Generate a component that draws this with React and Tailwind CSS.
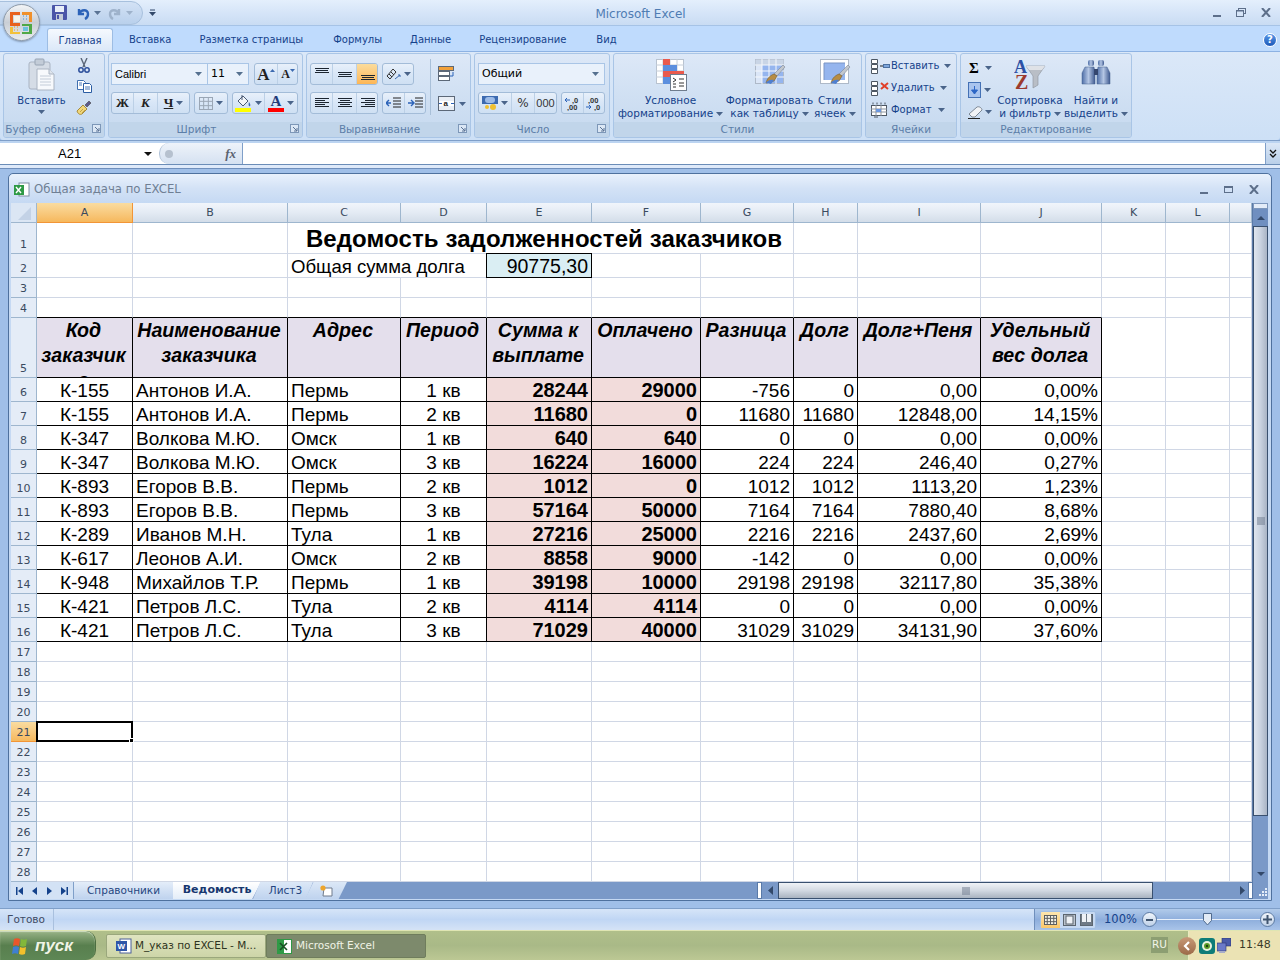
import React from 'react';

const Caret = ({ c = '#4a648a', className = '' }) => (
  <svg width="7" height="4" viewBox="0 0 7 4" className={`shrink-0 ${className}`}><path d="M0 0h7L3.5 4z" fill={c} /></svg>
);

const Lines = ({ rows, w = 16, h = 14 }) => (
  <svg width={w} height={h} viewBox={`0 0 ${w} ${h}`}>
    {rows.map(([x, y, l], i) => <rect key={i} x={x} y={y} width={l} height="1" fill="#1c2530" />)}
  </svg>
);

const Launcher = () => (
  <svg width="9" height="9" viewBox="0 0 9 9"><rect x=".5" y=".5" width="8" height="8" fill="#dbe7f5" stroke="#7d97b8" /><path d="M3 3l4 4M7 4v3H4" stroke="#5a7394" fill="none" /></svg>
);

const Group = ({ w, label, launcher, children, className = '' }) => (
  <div style={{ width: w }} className="flex h-[85px] shrink-0 flex-col overflow-hidden rounded-[3px] border border-[#a9c5e6] bg-gradient-to-b from-[#dde8f7] via-[#d0e0f3] to-[#c6d9ef]">
    <div className={`min-h-0 flex-1 ${className}`}>{children}</div>
    <div className={`relative flex h-[15px] shrink-0 items-center justify-center bg-[#c1d5ea] text-[10.5px] leading-none text-[#5c7ea8] ${launcher ? 'pr-[18px]' : ''}`}>
      {label}
      {launcher && <span className="absolute right-[3px] top-[2px] flex"><Launcher /></span>}
    </div>
  </div>
);

const BtnGroup = ({ w, children }) => (
  <div style={{ width: w }} className="flex h-[22px] shrink-0 items-center overflow-hidden rounded-[3px] border border-[#a3bcd8] bg-gradient-to-b from-[#e8f0fa] via-[#d8e6f7] to-[#cfe0f3]">{children}</div>
);

const Seg = ({ w, active, last, children }) => (
  <div style={{ width: w }} className={`flex h-full shrink-0 items-center justify-center gap-[3px] ${last ? '' : 'border-r border-[#bcd0e6]'} ${active ? 'bg-gradient-to-b from-[#fbdc9c] to-[#fdb655]' : ''}`}>{children}</div>
);

const Combo = ({ w, text, className = '' }) => (
  <div style={{ width: w }} className={`flex h-[22px] shrink-0 items-center justify-between border border-[#a9c5e6] bg-[#e9f1fb] pl-[3px] pr-[5px] text-[11px] text-black ${className}`}>
    <span>{text}</span><Caret c="#55708f" />
  </div>
);

const Clipboard = () => (
  <svg width="28" height="34" viewBox="0 0 28 34">
    <rect x="1" y="4" width="21" height="27" rx="2" fill="#d5dce6" stroke="#a9b3c2" />
    <rect x="7" y="1" width="9" height="6" rx="1" fill="#c3ccd8" stroke="#98a4b4" />
    <path d="M9 11h12l5 5v16H9z" fill="#f7f9fc" stroke="#aab4c2" />
    <path d="M21 11v5h5" fill="#dfe5ed" stroke="#aab4c2" />
    <path d="M12 18h11M12 21h11M12 24h11M12 27h11" stroke="#c3ccd8" />
  </svg>
);

const Scissors = () => (
  <svg width="12" height="15" viewBox="0 0 12 15">
    <path d="M3 0l4 9M9 0L5 9" stroke="#5a6678" strokeWidth="1.4" />
    <circle cx="3" cy="12" r="2.2" fill="none" stroke="#2c4f9b" strokeWidth="1.5" />
    <circle cx="9" cy="12" r="2.2" fill="none" stroke="#2c4f9b" strokeWidth="1.5" />
  </svg>
);

const Copy = () => (
  <svg width="15" height="13" viewBox="0 0 15 13">
    <path d="M.5.5h6l2 2v7h-8z" fill="#fff" stroke="#3f6fb0" />
    <path d="M6.5 3.5h6l2 2v7h-8z" fill="#fff" stroke="#2b5da3" />
    <path d="M8 7h5M8 9h5M2 3h3M2 5h3" stroke="#4a78b8" />
  </svg>
);

const Brush = () => (
  <svg width="16" height="15" viewBox="0 0 16 15">
    <path d="M1 11l6-6 4 4-5 5c-2 1-4 0-5-3z" fill="#f1d77a" stroke="#a88b3a" />
    <path d="M9 5l4-4 2 2-4 4z" fill="#5c5a8c" stroke="#444" strokeWidth=".6" />
    <path d="M4 12l3-3M6 13l3-3" stroke="#c2a34a" />
  </svg>
);

const Bucket = () => (
  <svg width="17" height="18" viewBox="0 0 17 18">
    <path d="M3 7l5-5 5 5-5 5z" fill="#f3f6fa" stroke="#4a5b74" />
    <path d="M7 1v5" stroke="#4a5b74" />
    <path d="M14 8c1 2 2 3 1 4s-2-1-1-4z" fill="#3c6ab0" />
    <rect x="0" y="14" width="16" height="4" fill="#ffff00" />
  </svg>
);

const Grid3 = ({ cols, rows, w, h, fill, stroke = '#7d8da3', children }) => (
  <svg width={w} height={h} viewBox={`0 0 ${w} ${h}`}>
    <rect x=".5" y=".5" width={w - 1} height={h - 1} fill={fill || '#fff'} stroke={stroke} />
    {Array.from({ length: cols - 1 }, (_, i) => <path key={i} d={`M${((i + 1) * w) / cols} 0V${h}`} stroke={stroke} />)}
    {Array.from({ length: rows - 1 }, (_, i) => <path key={i} d={`M0 ${((i + 1) * h) / rows}H${w}`} stroke={stroke} />)}
    {children}
  </svg>
);

const CondFormat = () => (
  <svg width="31" height="32" viewBox="0 0 31 32">
    <rect x=".5" y=".5" width="27" height="24" fill="#fff" stroke="#b9c3d0" />
    <path d="M7 0v25M14 0v25M21 0v25M0 6h28M0 12h28M0 18h28" stroke="#c6ced9" />
    <rect x="7" y="0" width="7" height="6" fill="#ea5a4d" />
    <rect x="7" y="6" width="14" height="6" fill="#5c8fde" />
    <rect x="7" y="12" width="21" height="6" fill="#ea5a4d" />
    <rect x="7" y="18" width="7" height="7" fill="#5c8fde" />
    <rect x="14.5" y="15.5" width="16" height="16" fill="#fff" stroke="#6f7c8d" />
    <path d="M17 19l3 2-3 2M17 25h3M23 20h5M23 24h5M23 27h5M17 28h3" stroke="#333" fill="none" />
  </svg>
);

const PaintBrush = ({ x = 16, y = 15 }) => (
  <g transform={`translate(${x} ${y})`}>
    <path d="M14-10l2 2-8 9-3-2z" fill="#c2c7ce" stroke="#7e8795" strokeWidth=".6" />
    <path d="M5-1l3 2-3 5-8 2c1-4 3-7 8-9z" fill="#b78c43" stroke="#7a5c27" strokeWidth=".6" />
    <path d="M-3 8c1-2 4-4 8-3l-3 4z" fill="#4f7fd0" />
  </g>
);

const FormatTable = () => (
  <svg width="32" height="30" viewBox="0 0 32 30">
    <rect x=".5" y=".5" width="28" height="24" fill="#dbe6f7" stroke="#aeb9c8" />
    <rect x=".5" y=".5" width="28" height="6" fill="#c9d5e6" />
    <rect x="7" y="6" width="21" height="18" fill="#95b5ee" />
    <path d="M7 0v25M14 0v25M21 0v25M0 6h29M0 12h29M0 18h29" stroke="#f4f7fb" />
    <PaintBrush x={14} y={16} />
  </svg>
);

const CellStyle = () => (
  <svg width="32" height="30" viewBox="0 0 32 30">
    <rect x=".5" y=".5" width="28" height="24" fill="#fff" stroke="#aeb9c8" />
    <rect x="4" y="4" width="21" height="17" fill="#95b5ee" />
    <path d="M4 4h21M4 4v17" stroke="#7b95c4" />
    <PaintBrush x={14} y={16} />
  </svg>
);

const CellInsert = ({ mark }) => (
  <svg width="19" height="15" viewBox="0 0 19 15" className="shrink-0">
    <path d="M.5.5h6v4h-6zM.5 5.5h6v4h-6zM.5 10.5h6v4h-6z" fill="#fff" stroke="#4d5763" />
    {mark === 'ins' && <><path d="M9 7h3" stroke="#222" /><rect x="12.5" y="5.5" width="6" height="3" fill="#7ea6dc" stroke="#4b6f9f" /></>}
    {mark === 'del' && <path d="M10 2l7 6M17 2l-7 6" stroke="#e0402a" strokeWidth="2" />}
  </svg>
);

const CellFormat = () => (
  <svg width="18" height="16" viewBox="0 0 18 16" className="shrink-0">
    <path d="M2 .5v2M6 .5v2M10 .5v2M14 .5v2" stroke="#4d5763" />
    <rect x=".5" y="3.5" width="15" height="10" fill="#fff" stroke="#4d5763" />
    <path d="M5 3v11M10 3v11M0 7h16M0 10h16" stroke="#8a939e" />
    <rect x="5" y="7" width="5" height="3" fill="#6b97e0" />
    <path d="M3 15h4" stroke="#4d5763" />
  </svg>
);

const Fill = () => (
  <svg width="13" height="16" viewBox="0 0 13 16"><rect x=".5" y=".5" width="12" height="15" fill="#a9c4ee" stroke="#4471b5" /><path d="M6.5 4v5M3.5 8h6l-3 4z" fill="#2d66c6" stroke="#2d66c6" /></svg>
);

const Eraser = () => (
  <svg width="16" height="14" viewBox="0 0 16 14"><path d="M1 9l8-7c2-1 5 1 5 3l-7 7H4z" fill="#f1f3f6" stroke="#7c8794" /><path d="M0 13.5h12" stroke="#222" /></svg>
);

const SortFilter = () => (
  <svg width="32" height="31" viewBox="0 0 32 31">
    <path d="M12 7h19l-7 10v9l-5 3V17z" fill="#b9bec6" stroke="#8b929c" strokeWidth=".6" />
    <path d="M12 7h19l-3 4H15z" fill="#dfe2e7" />
    <text x="0" y="14" fontFamily="Liberation Serif, serif" fontWeight="700" fontSize="18" fill="#2c50a4">A</text>
    <text x="1" y="30" fontFamily="Liberation Serif, serif" fontWeight="700" fontSize="20" fill="#9c3b2e">Z</text>
  </svg>
);

const Binoculars = () => (
  <svg width="30" height="28" viewBox="0 0 30 28">
    <defs><linearGradient id="bn" x1="0" x2="1"><stop offset="0" stopColor="#4f6fa8" /><stop offset=".5" stopColor="#b4c6e4" /><stop offset="1" stopColor="#3f5a90" /></linearGradient></defs>
    <rect x="7" y="1" width="6" height="6" rx="2" fill="url(#bn)" />
    <rect x="17" y="1" width="6" height="6" rx="2" fill="url(#bn)" />
    <path d="M4 8h9l1 5v12H1V14z" fill="url(#bn)" stroke="#46608f" strokeWidth=".5" />
    <path d="M17 8h9l3 6v11H16V13z" fill="url(#bn)" stroke="#46608f" strokeWidth=".5" />
    <rect x="13" y="10" width="4" height="6" fill="#34466e" />
  </svg>
);

const Orb = () => (
  <div className="absolute left-[3px] top-[4px] z-20 flex h-[37px] w-[37px] items-center justify-center rounded-full border border-[#8e9aa8] bg-gradient-to-b from-[#f3f5f7] via-[#c9ced5] to-[#e9ecef] shadow-[0_1px_2px_#7f93ad]">
    <svg width="25" height="25" viewBox="0 0 25 25">
      <path d="M1 2h10v3H4v8h7v3H1z" fill="#e8611c" />
      <rect x="5" y="6" width="6" height="6" fill="#f7f4ea" />
      <path d="M13 2h10v10h-3V5h-7z" fill="#f0902a" />
      <path d="M14 6h1M17 6h1M14 9h1M17 9h1" stroke="#3a8fd9" />
      <path d="M1 17h3v5h7v2H1z" fill="#f3c13a" />
      <path d="M5 17h1M8 17h1M5 20h1M8 20h1" stroke="#e0a020" />
      <path d="M13 14h10v10H13v-2h7v-6h-7z" fill="#4fa846" />
      <rect x="14" y="17" width="5" height="4" fill="#6cc0dd" />
    </svg>
  </div>
);

const WinMin = () => <span className="mb-[-6px] block h-[2px] w-[8px] bg-[#5d6f8a]" />;
const WinClose = () => (
  <svg width="10" height="9" viewBox="0 0 10 9"><path d="M1 0l8 9M9 0L1 9" stroke="#5d6f8a" strokeWidth="2" /></svg>
);

const TitleBar = () => (
  <div className="flex h-[26px] shrink-0 items-center border-b border-[#a6c3e6] bg-gradient-to-b from-[#e4effc] via-[#d6e5f8] to-[#c9dcf3]">
    <div className="ml-[-2px] flex h-[24px] w-[145px] shrink-0 items-center gap-[4px] rounded-r-[12px] border border-[#a7c0dd] bg-gradient-to-b from-[#d3e2f5] to-[#b9d0ec] pl-[53px]">
      <svg width="15" height="15" viewBox="0 0 15 15"><rect width="15" height="15" rx="1" fill="#4a55a8" /><rect x="3" y="1" width="9" height="6" fill="#e8eef8" /><rect x="4" y="9" width="7" height="6" fill="#c3cbd8" /><rect x="5" y="10" width="2" height="4" fill="#4a55a8" /></svg>
      <svg width="14" height="14" viewBox="0 0 14 14" className="ml-[5px]"><path d="M3 3v5h5M3 8c2-5 9-5 9 0 0 2-1 4-3 5" fill="none" stroke="#2b62b8" strokeWidth="2.4" /></svg>
      <Caret c="#5a7394" />
      <svg width="14" height="14" viewBox="0 0 14 14" className="ml-[3px]"><path d="M11 3v5H6M11 8C9 3 2 3 2 8c0 2 1 4 3 5" fill="none" stroke="#9eb2cb" strokeWidth="2.4" /></svg>
      <Caret c="#9eb2cb" />
    </div>
    <svg width="7" height="8" viewBox="0 0 7 8" className="ml-[6px]"><path d="M1 1h5" stroke="#33496a" /><path d="M0 3h7L3.5 7z" fill="#33496a" /></svg>
    <div className="ml-[254px] mr-[342px] w-0 flex-1 whitespace-nowrap pt-[3px] text-center text-[12px] text-[#4f7cb3]">Microsoft Excel</div>
    <div className="flex items-center gap-[15px] pr-[9px]">
      <WinMin />
      <svg width="10" height="9" viewBox="0 0 10 9"><rect x="2.5" y=".5" width="7" height="5" fill="none" stroke="#5d6f8a" /><rect x=".5" y="2.5" width="7" height="6" fill="#d6e5f8" stroke="#5d6f8a" /><path d="M0 3h8" stroke="#5d6f8a" /></svg>
      <WinClose />
    </div>
  </div>
);

const TabsBar = () => {
  const tabs = [['Вставка', 'ml-[16px]'], ['Разметка страницы', 'ml-[28px]'], ['Формулы', 'ml-[30px]'], ['Данные', 'ml-[28px]'], ['Рецензирование', 'ml-[28px]'], ['Вид', 'ml-[30px]']];
  return (
    <div className="flex h-[25px] shrink-0 items-end bg-[#bfdbfd] pl-[47px] text-[10px] text-[#15428b]">
      <div className="flex h-[23px] w-[66px] items-center justify-center rounded-t-[3px] border border-b-0 border-[#9dbde4] bg-gradient-to-b from-[#f5f9fe] to-[#dbe8f8]">Главная</div>
      {tabs.map(([t, c]) => <div key={t} className={`flex h-[23px] items-center ${c}`}>{t}</div>)}
      <div className="mb-[4px] ml-auto mr-[3px] flex h-[14px] w-[14px] items-center justify-center rounded-full border border-white bg-gradient-to-b from-[#5a98e8] to-[#1b58b8] text-[10px] font-bold leading-none text-white">?</div>
    </div>
  );
};

const Ribbon = () => (
  <div className="flex h-[89px] shrink-0 gap-[3px] rounded-b-[3px] border-t border-[#8db2e3] bg-gradient-to-b from-[#dbe8f8] to-[#cde0f6] pl-[3px] pr-[2px] pt-[1px] font-['DejaVu_Sans',sans-serif] text-[#15428b]">
    <Group w={102} label="Буфер обмена" launcher className="flex gap-[2px] pl-[8px] pt-[4px]">
      <div className="flex w-[62px] flex-col items-center pr-[3px]">
        <Clipboard />
        <span className="mt-[2px] text-[10px] leading-[13px]">Вставить</span>
        <Caret className="mt-[3px]" />
      </div>
      <div className="flex flex-col items-center gap-[7px]"><Scissors /><Copy /><Brush /></div>
    </Group>

    <Group w={195} label="Шрифт" launcher className="flex flex-col gap-[7px] pl-[2px] pt-[9px]">
      <div className="flex items-center">
        <Combo w={97} text="Calibri" className="font-['Liberation_Sans',sans-serif] text-[11.5px]" />
        <Combo w={42} text="11" className="ml-[-1px]" />
        <div className="ml-[5px]"><BtnGroup w={44}>
          <Seg w={23}>
            <span className="font-['Liberation_Serif',serif] text-[17px] font-bold leading-none text-[#222]">A</span>
            <svg width="5" height="3" viewBox="0 0 5 3" className="mb-[8px] ml-[-3px]"><path d="M0 3h5L2.5 0z" fill="#3c6ab0" /></svg>
          </Seg>
          <Seg w={20} last>
            <span className="font-['Liberation_Serif',serif] text-[12px] font-bold leading-none text-[#222]">A</span>
            <svg width="5" height="3" viewBox="0 0 5 3" className="mb-[8px] ml-[-3px]"><path d="M0 0h5L2.5 3z" fill="#3c6ab0" /></svg>
          </Seg>
        </BtnGroup></div>
      </div>
      <div className="flex items-center gap-[4px]">
        <BtnGroup w={79}>
          <Seg w={22}><span className="font-['Liberation_Serif',serif] text-[13px] font-bold text-[#222]">Ж</span></Seg>
          <Seg w={24}><span className="font-['Liberation_Serif',serif] text-[13px] font-bold italic text-[#222]">К</span></Seg>
          <Seg w={31} last><span className="font-['Liberation_Serif',serif] text-[13px] font-bold text-[#222] underline">Ч</span><Caret /></Seg>
        </BtnGroup>
        <BtnGroup w={34}>
          <Seg w={32} last><Grid3 cols={3} rows={3} w={14} h={13} fill="none" stroke="#9aa6b5" /><Caret /></Seg>
        </BtnGroup>
        <BtnGroup w={66}>
          <Seg w={32}><Bucket /><Caret /></Seg>
          <Seg w={32} last>
            <span className="flex flex-col items-center"><span className="font-['Liberation_Serif',serif] text-[15px] font-bold leading-[14px] text-[#223a78]">A</span><span className="block h-[4px] w-[16px] bg-[#ff0000]" /></span>
            <Caret />
          </Seg>
        </BtnGroup>
      </div>
    </Group>

    <Group w={165} label="Выравнивание" launcher className="flex pl-[3px] pt-[9px]">
      <div className="flex flex-col gap-[7px]">
        <div className="flex gap-[4px]">
          <BtnGroup w={68}>
            <Seg w={22}><Lines rows={[[1, 1, 14], [2, 3, 12], [1, 5, 14]]} /></Seg>
            <Seg w={24}><Lines rows={[[1, 5, 14], [2, 7, 12], [1, 9, 14]]} /></Seg>
            <Seg w={21} last active><Lines rows={[[1, 8, 14], [2, 10, 12], [1, 12, 14]]} /></Seg>
          </BtnGroup>
          <BtnGroup w={32}>
            <Seg w={30} last>
              <svg width="15" height="13" viewBox="0 0 15 13"><path d="M1 8l6-7 3 3-6 7zM3 6l3 3M5 4l3 3" stroke="#333" fill="none" /><path d="M9 11l5-4m-2 0h2v2" stroke="#3c6ab0" fill="none" /></svg>
              <Caret />
            </Seg>
          </BtnGroup>
        </div>
        <div className="flex gap-[4px]">
          <BtnGroup w={68}>
            <Seg w={22}><Lines rows={[[1, 2, 14], [1, 4, 10], [1, 6, 14], [1, 8, 10], [1, 10, 14]]} /></Seg>
            <Seg w={24}><Lines rows={[[1, 2, 14], [3, 4, 10], [1, 6, 14], [3, 8, 10], [1, 10, 14]]} /></Seg>
            <Seg w={21} last><Lines rows={[[1, 2, 14], [5, 4, 10], [1, 6, 14], [5, 8, 10], [1, 10, 14]]} /></Seg>
          </BtnGroup>
          <BtnGroup w={44}>
            <Seg w={22}><svg width="15" height="13" viewBox="0 0 15 13"><path d="M7 1h8M7 4h8M7 7h8M7 10h8" stroke="#222" /><path d="M0 6h5M3 3L0 6l3 3" stroke="#2b62b8" fill="none" strokeWidth="1.4" /></svg></Seg>
            <Seg w={20} last><svg width="15" height="13" viewBox="0 0 15 13"><path d="M7 1h8M7 4h8M7 7h8M7 10h8" stroke="#222" /><path d="M0 6h5M3 3l3 3-3 3" stroke="#2b62b8" fill="none" strokeWidth="1.4" /></svg></Seg>
          </BtnGroup>
        </div>
      </div>
      <div className="ml-[4px] mt-[-4px] h-[56px] w-px bg-[#a9c0d9]" />
      <div className="ml-[7px] flex flex-col gap-[14px] pt-[3px]">
        <svg width="17" height="16" viewBox="0 0 17 16"><rect x=".5" y=".5" width="15" height="4" fill="#f2a13a" stroke="#5c6878" /><rect x=".5" y="5.5" width="11" height="4" fill="#fff" stroke="#5c6878" /><rect x=".5" y="10.5" width="11" height="4" fill="#fff" stroke="#5c6878" /><path d="M15 6v4h-3" stroke="#2b62b8" fill="none" /></svg>
        <div className="flex items-center gap-[4px]">
          <svg width="17" height="15" viewBox="0 0 17 15"><rect x=".5" y=".5" width="16" height="14" fill="#e9eef5" stroke="#5c6878" /><rect x="1" y="5" width="15" height="5" fill="#fff" /><path d="M1 7.5h3M13 7.5h3" stroke="#2b62b8" /><text x="5.5" y="10" fontSize="8" fontWeight="700" fontFamily="Liberation Sans, sans-serif" fill="#222">a</text></svg>
          <Caret />
        </div>
      </div>
    </Group>

    <Group w={136} label="Число" launcher className="flex flex-col gap-[7px] pl-[3px] pt-[9px]">
      <Combo w={127} text="Общий" />
      <div className="flex gap-[4px]">
        <BtnGroup w={79}>
          <Seg w={33}>
            <svg width="16" height="16" viewBox="0 0 16 16"><rect y="1" width="16" height="8" fill="#3c6ab0" /><rect x="3" y="2" width="10" height="6" rx="3" fill="#9cbbe8" /><circle cx="11" cy="12" r="3" fill="#f0c030" /><circle cx="5" cy="12" r="2" fill="#f0c030" /></svg>
            <Caret />
          </Seg>
          <Seg w={23}><span className="text-[12px] text-[#333]">%</span></Seg>
          <Seg w={21} last><span className="font-['Liberation_Sans',sans-serif] text-[11px] text-[#333]">000</span></Seg>
        </BtnGroup>
        <BtnGroup w={44}>
          <Seg w={22}><svg width="18" height="15" viewBox="0 0 18 15"><path d="M1 4h5M3 2L1 4l2 2" stroke="#2b62b8" fill="none" /><text x="8" y="7" fontSize="7.5" fontWeight="700" fill="#333" fontFamily="Liberation Sans, sans-serif">,0</text><text x="3" y="14" fontSize="7.5" fontWeight="700" fill="#333" fontFamily="Liberation Sans, sans-serif">,00</text></svg></Seg>
          <Seg w={20} last><svg width="18" height="15" viewBox="0 0 18 15"><text x="3" y="7" fontSize="7.5" fontWeight="700" fill="#333" fontFamily="Liberation Sans, sans-serif">,00</text><path d="M1 11h5M4 9l2 2-2 2" stroke="#2b62b8" fill="none" /><text x="9" y="14" fontSize="7.5" fontWeight="700" fill="#333" fontFamily="Liberation Sans, sans-serif">,0</text></svg></Seg>
        </BtnGroup>
      </div>
    </Group>

    <Group w={249} label="Стили" className="flex items-start pt-[5px] text-[10.5px] leading-[13px]">
      <div className="flex w-[113px] flex-col items-center"><div className="flex h-[32px] items-start pl-[2px]"><CondFormat /></div><span className="mt-[3px]">Условное</span><span className="flex items-center gap-[3px] whitespace-nowrap">форматирование<Caret /></span></div>
      <div className="flex w-[85px] flex-col items-center"><div className="flex h-[32px] items-start pl-[2px]"><FormatTable /></div><span className="mt-[3px] whitespace-nowrap">Форматировать</span><span className="flex items-center gap-[3px] whitespace-nowrap">как таблицу<Caret /></span></div>
      <div className="flex w-[46px] flex-col items-center"><div className="flex h-[32px] items-start pl-[2px]"><CellStyle /></div><span className="mt-[3px]">Стили</span><span className="flex items-center gap-[3px] whitespace-nowrap">ячеек<Caret /></span></div>
    </Group>

    <Group w={92} label="Ячейки" className="flex flex-col gap-[6px] pl-[5px] pt-[4px] text-[10px] leading-[16px]">
      <div className="flex items-center gap-[1px]"><CellInsert mark="ins" />Вставить<Caret className="ml-[4px]" /></div>
      <div className="flex items-center gap-[1px]"><CellInsert mark="del" />Удалить<Caret className="ml-[4px]" /></div>
      <div className="flex items-center gap-[2px]"><CellFormat />Формат<Caret className="ml-[4px]" /></div>
    </Group>

    <Group w={172} label="Редактирование" className="flex pl-[7px] pt-[5px] text-[10.5px] leading-[13px]">
      <div className="flex w-[26px] flex-col gap-[6px] pt-[1px]">
        <div className="flex h-[16px] items-center gap-[6px] pl-[1px]"><span className="font-['Liberation_Serif',serif] text-[15px] font-bold leading-none text-black">Σ</span><Caret /></div>
        <div className="flex h-[16px] items-center gap-[3px]"><Fill /><Caret /></div>
        <div className="flex h-[16px] items-center gap-[1px]"><Eraser /><Caret /></div>
      </div>
      <div className="flex w-[72px] flex-col items-center"><div className="flex h-[32px] items-start"><SortFilter /></div><span className="mt-[3px] whitespace-nowrap">Сортировка</span><span className="flex items-center gap-[3px] whitespace-nowrap">и фильтр<Caret /></span></div>
      <div className="flex w-[60px] flex-col items-center"><div className="flex h-[32px] items-start"><Binoculars /></div><span className="mt-[3px] whitespace-nowrap">Найти и</span><span className="flex items-center gap-[3px] whitespace-nowrap">выделить<Caret /></span></div>
    </Group>
  </div>
);

const FormulaBar = () => (
  <div className="shrink-0 bg-[#a9c6ec]">
    <div className="h-[3px] border-t border-[#7f9fc9] bg-[#bcd4f1]" />
    <div className="flex h-[22px] border-b border-[#6b8db8] bg-white">
      <div className="flex w-[159px] items-center justify-between pl-[58px] pr-[7px] pt-[1px] font-['Liberation_Sans',sans-serif] text-[13px] text-black">A21<svg width="8" height="4" viewBox="0 0 8 4"><path d="M0 0h8L4 4z" fill="#111" /></svg></div>
      <div className="flex w-[84px] items-center justify-between rounded-l-[10px] border-l border-r border-l-[#b0c2d8] border-r-[#7f9fc9] bg-gradient-to-b from-[#eef3fa] to-[#d5e1f1] pl-[5px] pr-[6px]">
        <span className="h-[8px] w-[8px] rounded-full bg-[#b6c1cf]" />
        <span className="font-['Liberation_Serif',serif] text-[13px] font-bold italic text-[#5a6270]">fx</span>
      </div>
      <div className="flex-1" />
      <div className="flex w-[15px] items-center justify-center border-l border-[#7f9fc9] bg-gradient-to-b from-[#dce8f7] to-[#b9cfe9]">
        <svg width="8" height="9" viewBox="0 0 8 9"><path d="M1 1l3 3 3-3M1 5l3 3 3-3" stroke="#111" fill="none" strokeWidth="1.3" /></svg>
      </div>
    </div>
    <div className="h-[4px] border-b border-[#6f8fbc] bg-[#dfeafa]" />
  </div>
);

const headers = [
  <>Код<br />заказчик<br />а</>,
  <>Наименование<br />заказчика</>,
  'Адрес',
  'Период',
  <>Сумма к<br />выплате</>,
  'Оплачено',
  'Разница',
  'Долг',
  'Долг+Пеня',
  <>Удельный<br />вес долга</>,
];

const data = [
  ['К-155', 'Антонов И.А.', 'Пермь', '1 кв', '28244', '29000', '-756', '0', '0,00', '0,00%'],
  ['К-155', 'Антонов И.А.', 'Пермь', '2 кв', '11680', '0', '11680', '11680', '12848,00', '14,15%'],
  ['К-347', 'Волкова М.Ю.', 'Омск', '1 кв', '640', '640', '0', '0', '0,00', '0,00%'],
  ['К-347', 'Волкова М.Ю.', 'Омск', '3 кв', '16224', '16000', '224', '224', '246,40', '0,27%'],
  ['К-893', 'Егоров В.В.', 'Пермь', '2 кв', '1012', '0', '1012', '1012', '1113,20', '1,23%'],
  ['К-893', 'Егоров В.В.', 'Пермь', '3 кв', '57164', '50000', '7164', '7164', '7880,40', '8,68%'],
  ['К-289', 'Иванов М.Н.', 'Тула', '1 кв', '27216', '25000', '2216', '2216', '2437,60', '2,69%'],
  ['К-617', 'Леонов А.И.', 'Омск', '2 кв', '8858', '9000', '-142', '0', '0,00', '0,00%'],
  ['К-948', 'Михайлов Т.Р.', 'Пермь', '1 кв', '39198', '10000', '29198', '29198', '32117,80', '35,38%'],
  ['К-421', 'Петров Л.С.', 'Тула', '2 кв', '4114', '4114', '0', '0', '0,00', '0,00%'],
  ['К-421', 'Петров Л.С.', 'Тула', '3 кв', '71029', '40000', '31029', '31029', '34131,90', '37,60%'],
];

const cols = ['A', 'B', 'C', 'D', 'E', 'F', 'G', 'H', 'I', 'J', 'K', 'L', ''];

const RowNum = ({ n, sel }) => (
  <div className={`flex items-end justify-center border-b border-r pb-[1px] font-['DejaVu_Sans',sans-serif] text-[11px] leading-[15px] text-[#3a4a60] ${sel ? 'border-[#f29536] bg-gradient-to-b from-[#f9dca0] to-[#f6b85c]' : 'border-[#9eb6ce] bg-[#e4ecf7]'}`}>{n}</div>
);

const Blank = ({ black }) => <div className={`border-b border-r border-r-[#d0d7e5] ${black ? 'border-b-black' : 'border-b-[#d0d7e5]'}`} />;

const Sheet = () => {
  const align = ['justify-center', 'justify-start pl-[3px]', 'justify-start pl-[3px]', 'justify-center', 'justify-end pr-[3px]', 'justify-end pr-[3px]', 'justify-end pr-[3px]', 'justify-end pr-[3px]', 'justify-end pr-[3px]', 'justify-end pr-[3px]'];
  const emptyRows = [17, 18, 19, 20, 21, 22, 23, 24, 25, 26, 27, 28];
  return (
    <div className="grid grid-cols-[26px_96px_155px_113px_86px_105px_109px_93px_64px_123px_121px_64px_64px_22px] grid-rows-[20px_31px_24px_20px_20px_60px_repeat(11,24px)_repeat(12,20px)] bg-white font-['Liberation_Sans',sans-serif] text-[19px] text-black">
      <div className="flex items-center justify-center border-b border-r border-[#9eb6ce] bg-[#dbe6f4]">
        <svg width="14" height="14" viewBox="0 0 14 14"><path d="M14 1v13H1z" fill="#c3d2e6" /></svg>
      </div>
      {cols.map((c, i) => (
        <div key={i} className={`flex items-center justify-center border-b border-r pt-[2px] font-['DejaVu_Sans',sans-serif] text-[11px] text-[#3a4a60] ${i === 0 ? 'border-[#f29536] bg-gradient-to-b from-[#f9dca0] to-[#f6b85c]' : 'border-[#9eb6ce] bg-gradient-to-b from-[#f1f5fb] via-[#e4ebf4] to-[#d3dde9]'}`}>{c}</div>
      ))}

      <RowNum n={1} /><Blank /><Blank />
      <div className="col-span-5 flex items-center justify-center whitespace-nowrap border-b border-r border-[#d0d7e5] pl-[7px] pt-[1px] text-[24px] font-bold tracking-[0.1px]">Ведомость задолженностей заказчиков</div>
      <Blank /><Blank /><Blank /><Blank /><Blank /><Blank />

      <RowNum n={2} /><Blank /><Blank />
      <div className="col-span-2 flex items-center whitespace-nowrap border-b border-[#d0d7e5] pl-[3px] pt-[2px] text-[18.6px]">Общая сумма долга</div>
      <div className="relative z-10 ml-[-1px] mt-[-1px] flex items-center justify-end border border-black bg-[#daeef3] pr-[3px] pt-[2px] text-[19.5px]">90775,30</div>
      <Blank /><Blank /><Blank /><Blank /><Blank /><Blank /><Blank /><Blank />

      <RowNum n={3} />{cols.map((_, i) => <Blank key={i} />)}
      <RowNum n={4} />{cols.map((_, i) => <Blank key={i} black={i < 10} />)}

      <RowNum n={5} />
      {headers.map((h, i) => (
        <div key={i} className="overflow-hidden whitespace-nowrap border-b border-r border-black bg-[#e4dfec] pr-[2px] text-center text-[19.6px] font-bold italic leading-[25px]">{h}</div>
      ))}
      <Blank /><Blank /><Blank />

      {data.map((r, ri) => (
        <React.Fragment key={ri}>
          <RowNum n={ri + 6} />
          {r.map((v, i) => (
            <div key={i} className={`flex items-center whitespace-nowrap border-b border-r border-black pt-[1px] leading-none ${align[i]} ${i === 4 || i === 5 ? 'bg-[#f2dcdb] text-[20px] font-bold' : ''}`}>{v}</div>
          ))}
          <Blank /><Blank /><Blank />
        </React.Fragment>
      ))}

      {emptyRows.map((n) => (
        <React.Fragment key={n}>
          <RowNum n={n} sel={n === 21} />
          {cols.map((_, i) =>
            n === 21 && i === 0 ? (
              <div key={i} className="relative z-10 ml-[-1px] mt-[-1px] border-2 border-black">
                <span className="absolute bottom-[-3px] right-[-3px] h-[5px] w-[5px] border border-white bg-black" />
              </div>
            ) : <Blank key={i} />
          )}
        </React.Fragment>
      ))}
    </div>
  );
};

const VScroll = () => (
  <div className="flex w-[16px] shrink-0 flex-col items-center border-l border-[#5a7aa8] bg-[#7a99c8]">
    <div className="h-[6px] w-full border border-[#7d97bc] bg-[#e3ecf8]" />
    <div className="flex h-[17px] w-full items-center justify-center bg-[#6f8fc0]"><svg width="8" height="4" viewBox="0 0 8 4"><path d="M0 4h8L4 0z" fill="#33496a" /></svg></div>
    <div className="flex h-[590px] w-full items-center justify-center border border-[#39506f] bg-gradient-to-r from-[#dfe5ee] via-[#c9d2e0] to-[#a9b4c5]">
      <svg width="8" height="8" viewBox="0 0 8 8"><path d="M0 1h8M0 3h8M0 5h8M0 7h8" stroke="#6e7b8d" /></svg>
    </div>
    <div className="flex-1" />
    <div className="flex h-[16px] w-full items-center justify-center"><svg width="8" height="4" viewBox="0 0 8 4"><path d="M0 0h8L4 4z" fill="#33496a" /></svg></div>
  </div>
);

const NavTri = ({ d }) => <svg width="8" height="8" viewBox="0 0 8 8"><path d={d} fill="#15428b" /></svg>;

const SheetTabs = () => (
  <div className="flex h-[17px] shrink-0 items-stretch bg-[#7a99c8] font-['DejaVu_Sans',sans-serif] text-[10.5px] text-[#25467f]">
    <div className="flex w-[63px] items-center justify-around border-r border-[#7f9fc9] bg-[#d3e2f5] px-[2px]">
      <NavTri d="M0 0h1.5v8H0zM7 0v8L2 4z" /><NavTri d="M6 0v8L1 4z" /><NavTri d="M2 0v8l5-4z" /><NavTri d="M1 0v8l5-4zM6.5 0H8v8H6.5z" />
    </div>
    <div className="flex w-[99px] items-center justify-center bg-gradient-to-b from-[#e4edf9] to-[#bfd3ee]">Справочники</div>
    <div className="flex w-[88px] items-center justify-center bg-gradient-to-b from-white to-[#e4edf8] text-[11px] font-bold text-[#17376f] [clip-path:polygon(0_0,100%_0,90%_100%,0_100%)]">Ведомость</div>
    <div className="ml-[-8px] flex w-[60px] items-center justify-center bg-gradient-to-b from-[#dce8f7] to-[#bfd3ee] pl-[5px] [clip-path:polygon(12%_0,100%_0,88%_100%,0_100%)]">Лист3</div>
    <div className="ml-[-8px] flex w-[42px] items-center justify-center bg-gradient-to-b from-[#dce8f7] to-[#bfd3ee] [clip-path:polygon(20%_0,100%_0,80%_100%,0_100%)]">
      <svg width="13" height="12" viewBox="0 0 13 12"><path d="M4 3h8v8H3z" fill="#fff" stroke="#6e7b8d" /><circle cx="3" cy="3" r="2.6" fill="#eda52c" /></svg>
    </div>
    <div className="w-[410px]" />
    <div className="h-full w-[5px] border border-[#5a7aa8] bg-white" />
    <div className="flex w-[16px] items-center justify-center"><svg width="5" height="9" viewBox="0 0 5 9"><path d="M5 0v9L0 4.5z" fill="#33496a" /></svg></div>
    <div className="flex w-[375px] items-center justify-center border border-[#39506f] bg-gradient-to-b from-[#f0f3f7] via-[#d3d9e2] to-[#a9b3c0]">
      <svg width="8" height="8" viewBox="0 0 8 8"><path d="M1 0v8M3 0v8M5 0v8M7 0v8" stroke="#6e7b8d" /></svg>
    </div>
    <div className="flex-1" />
    <div className="flex w-[12px] items-center justify-center"><svg width="5" height="9" viewBox="0 0 5 9"><path d="M0 0v9l5-4.5z" fill="#33496a" /></svg></div>
    <div className="h-full w-[5px] border border-[#5a7aa8] bg-white" />
    <div className="flex w-[15px] items-end justify-end pb-[1px] pr-[1px]"><svg width="11" height="11" viewBox="0 0 11 11"><path d="M9 1h2v2H9zM6 4h2v2H6zM9 4h2v2H9zM3 7h2v2H3zM6 7h2v2H6zM9 7h2v2H9z" fill="#e6eef9" /></svg></div>
  </div>
);

const WorkbookWindow = () => (
  <div className="mx-[8px] mt-[4px] flex h-[728px] shrink-0 flex-col rounded-t-[5px] border border-[#4f719e] bg-[#c5d9f3] pb-[1px] pl-[2px] pr-[3px]">
    <div className="ml-[-2px] mr-[-3px] flex h-[29px] shrink-0 items-center rounded-t-[5px] bg-gradient-to-b from-[#e9f1fc] via-[#d3e2f6] to-[#c5d9f3] pl-[5px] pr-[12px] pt-[2px]">
      <svg width="16" height="16" viewBox="0 0 16 16"><rect x="5" y="1" width="10" height="13" fill="#fff" stroke="#7f8fa3" /><rect x="0" y="3" width="10" height="10" fill="#2f9a46" /><path d="M2 5l5 6M7 5l-5 6" stroke="#fff" strokeWidth="1.4" /></svg>
      <span className="ml-[4px] font-['DejaVu_Sans',sans-serif] text-[11.7px] text-[#6f7f94]">Общая задача по EXCEL</span>
      <div className="ml-auto flex items-center gap-[16px]">
        <WinMin />
        <span className="block h-[7px] w-[9px] border border-t-2 border-[#5d6f8a]" />
        <WinClose />
      </div>
    </div>
    <div className="flex min-h-0 flex-1">
      <div className="min-w-0 flex-1 overflow-hidden"><Sheet /></div>
      <VScroll />
    </div>
    <SheetTabs />
  </div>
);

const StatusBar = () => (
  <div className="flex h-[22px] shrink-0 items-stretch border-t border-[#7f9fc9] font-['DejaVu_Sans',sans-serif] text-[11px]">
    <div className="flex w-[54px] items-center border-r border-[#a9c0de] bg-gradient-to-b from-[#d6e5f8] via-[#c3d8f4] to-[#d5e3f6] pl-[7px] text-[10.5px] text-[#3d4a63]">Готово</div>
    <div className="flex-1 bg-gradient-to-b from-[#d6e5f8] via-[#c0d6f4] to-[#d5e3f6]" />
    <div className="flex w-[1px] bg-[#6f8fbc]" />
    <div className="flex w-[245px] items-center bg-gradient-to-b from-[#b2cbea] via-[#8eaedc] to-[#a9c4e9] pl-[5px] text-[#15428b]">
      <div className="flex h-[18px] w-[56px] overflow-hidden rounded-[2px] border border-[#a2bfe3] bg-[#c6d9f2]">
        <div className="flex w-[19px] items-center justify-center bg-gradient-to-b from-[#fde6ae] to-[#fbc767]"><Grid3 cols={4} rows={3} w={13} h={10} fill="#f4f1e4" stroke="#5c5f60" /></div>
        <div className="flex w-[18px] items-center justify-center"><svg width="13" height="12" viewBox="0 0 13 12"><rect x=".5" y=".5" width="12" height="11" fill="#bcc4ce" stroke="#5c6670" /><rect x="3" y="2" width="7" height="8" fill="#eef1f5" stroke="#5c6670" /></svg></div>
        <div className="flex w-[17px] items-center justify-center"><svg width="13" height="12" viewBox="0 0 13 12"><rect x=".5" y=".5" width="12" height="11" fill="#6f7a86" stroke="#5c6670" /><rect x="2" y="0" width="4" height="8" fill="#eef1f5" /><rect x="7" y="0" width="4" height="8" fill="#eef1f5" /></svg></div>
      </div>
      <span className="ml-[8px] w-[38px] text-[11.5px] text-[#15428b]">100%</span>
      <span className="flex h-[15px] w-[15px] items-center justify-center rounded-full border border-[#5d7ba3] bg-gradient-to-b from-[#f0f5fb] to-[#bfd1e8]"><span className="h-[2px] w-[7px] bg-[#40556f]" /></span>
      <div className="relative flex h-[15px] w-[103px] items-center">
        <span className="h-px w-full bg-[#e8f0fa]" />
        <svg width="9" height="13" viewBox="0 0 9 13" className="absolute left-[46px] top-[1px]"><path d="M.5.5h8v7L4.5 12 .5 7.5z" fill="#e3ebf5" stroke="#4f6a8e" /></svg>
      </div>
      <span className="flex h-[15px] w-[15px] items-center justify-center rounded-full border border-[#5d7ba3] bg-gradient-to-b from-[#f0f5fb] to-[#bfd1e8]">
        <svg width="9" height="9" viewBox="0 0 9 9"><path d="M4.5 0v9M0 4.5h9" stroke="#40556f" strokeWidth="2" /></svg>
      </span>
    </div>
  </div>
);

const Taskbar = () => (
  <div className="flex h-[30px] shrink-0 items-stretch border-t border-[#dfe5b3] bg-gradient-to-b from-[#b0bf8a] via-[#a9b987] to-[#bcc894] font-['DejaVu_Sans',sans-serif] text-[11px]">
    <div className="flex w-[96px] items-center gap-[4px] rounded-r-[10px] border-r border-[#4c6e40] bg-gradient-to-b from-[#9ab488] via-[#587f4e] to-[#5e8755] pl-[11px] font-['Liberation_Sans',sans-serif] text-[17px] font-bold italic text-[#f0f4e6] shadow-[inset_0_1px_1px_#cfdcc0]">
      <svg width="20" height="20" viewBox="0 0 20 20"><path d="M3 3c2-1 4-1 6 0l-1 7c-2-1-4-1-6 0z" fill="#e9562b" /><path d="M10 3c2 1 4 1 6 0l-1 7c-2 1-4 1-6 0z" fill="#82b83a" /><path d="M2 11c2-1 4-1 6 0l-1 7c-2-1-4-1-6 0z" fill="#3f7fd2" /><path d="M9 11c2 1 4 1 6 0l-1 7c-2 1-4 1-6 0z" fill="#f2c02b" /></svg>
      пуск
    </div>
    <div className="ml-[10px] mt-[3px] flex h-[24px] w-[160px] items-center gap-[3px] rounded-[2px] border border-[#9aa77c] bg-gradient-to-b from-[#dfe4c0] to-[#cdd5a8] pl-[9px] text-[10.5px] text-[#2d3320]">
      <svg width="16" height="16" viewBox="0 0 16 16"><rect x="4" y="1" width="11" height="14" fill="#fff" stroke="#4b5f98" /><rect x="0" y="3" width="11" height="10" fill="#2f56a8" /><text x="1.5" y="11" fontSize="8" fontWeight="700" fill="#fff" fontFamily="Liberation Sans, sans-serif">W</text></svg>
      <span className="whitespace-nowrap">М_указ по EXCEL - М...</span>
    </div>
    <div className="mt-[3px] flex h-[24px] w-[160px] items-center gap-[4px] rounded-[2px] border border-[#6f7d5c] bg-[#7d8a6c] pl-[10px] text-[10.5px] text-[#f0f3e6]">
      <svg width="15" height="15" viewBox="0 0 15 15"><rect x=".5" y=".5" width="14" height="14" fill="#fff" stroke="#2f9a46" /><rect x="1" y="1" width="6" height="13" fill="#2f9a46" /><path d="M3 4l7 7M10 4l-7 7" stroke="#184f22" strokeWidth="1.6" /></svg>
      <span className="whitespace-nowrap">Microsoft Excel</span>
    </div>
    <div className="flex-1" />
    <div className="mr-[10px] mt-[6px] flex h-[16px] w-[17px] items-center justify-center bg-[#8c9e72] text-[10.5px] text-[#f2f5e8]">RU</div>
    <div className="relative z-10 mr-[-8px] mt-[6px] flex h-[18px] w-[18px] items-center justify-center rounded-full bg-gradient-to-b from-[#c89a78] to-[#9b6a48]">
      <svg width="8" height="10" viewBox="0 0 8 10"><path d="M6 1L2 5l4 4" stroke="#fff" strokeWidth="2.2" fill="none" /></svg>
    </div>
    <div className="flex w-[92px] items-center border-l border-[#e8eabf] bg-[#ebe3b4] pl-[10px] text-[11px] text-[#3a3a28]">
      <svg width="16" height="16" viewBox="0 0 16 16"><rect width="16" height="16" rx="3" fill="#0e7c78" /><circle cx="8" cy="8" r="5" fill="#e9f3de" /><circle cx="8" cy="8" r="3" fill="#5a9a28" /><circle cx="8" cy="8" r="1.2" fill="#1c3d10" /></svg>
      <svg width="14" height="15" viewBox="0 0 14 15" className="ml-[2px]"><rect x="5" y="0" width="9" height="8" fill="#4b5ba8" stroke="#2b3570" strokeWidth=".6" /><rect x="0" y="5" width="9" height="8" fill="#6b7ac8" stroke="#2b3570" strokeWidth=".6" /><rect x="2" y="13" width="6" height="2" fill="#a7adc9" /></svg>
      <span className="ml-[8px]">11:48</span>
    </div>
  </div>
);

export default function App() {
  return (
    <div className="flex h-[960px] w-[1280px] flex-col overflow-hidden bg-[#a0bfe8] font-['DejaVu_Sans',sans-serif]">
      <div className="relative shrink-0">
        <Orb />
        <TitleBar />
        <TabsBar />
        <Ribbon />
      </div>
      <FormulaBar />
      <WorkbookWindow />
      <div className="flex-1" />
      <StatusBar />
      <Taskbar />
    </div>
  );
}
